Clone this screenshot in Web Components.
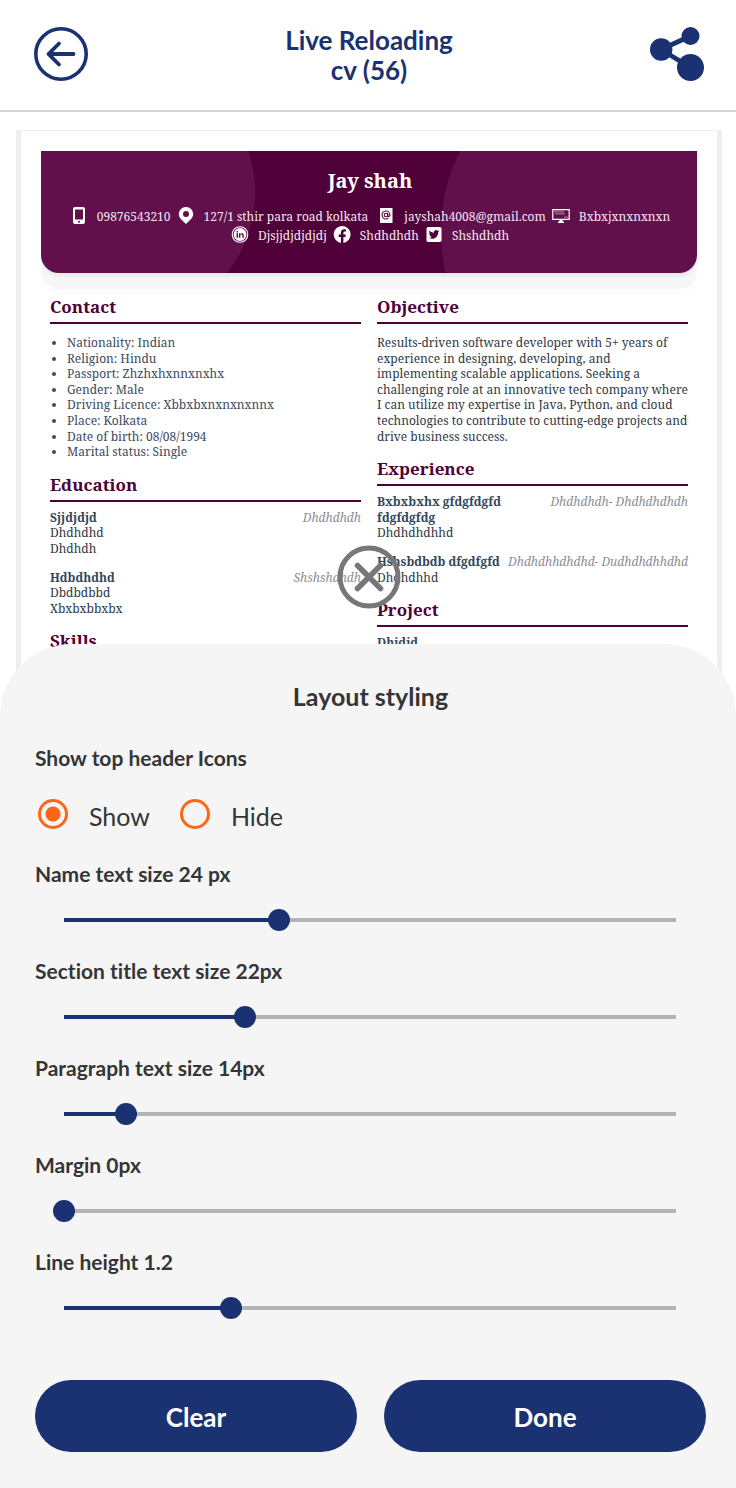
<!DOCTYPE html>
<html lang="en">
<head>
<meta charset="utf-8">
<meta name="viewport" content="width=device-width, initial-scale=1">
<title>Live Reloading cv (56)</title>
<style>
  html, body { margin: 0; height: 100%; background: #fff; }
  body {
    --navy: #1b3272; --plum: #4f0039; --ink: #343537;
    font-family: Lato, "Open Sans", sans-serif; color: var(--ink);
    font-variant-ligatures: none;
  }
</style>
</head>
<body>
<cv-app></cv-app>

<template id="cv-app">
  <style>
    :host { display: flex; flex-direction: column; height: 100vh; min-height: 1200px; }
    cv-preview { flex: 1 1 0; min-height: 0; }
    style-sheet { margin-top: -72px; }
  </style>
  <top-bar><span>Live Reloading</span><span>cv (56)</span></top-bar>
  <cv-preview>
    <cv-header>
      <span slot="name">Jay shah</span>
      <contact-item icon="phone">09876543210</contact-item>
      <contact-item icon="pin">127/1 sthir para road kolkata&nbsp;</contact-item>
      <contact-item icon="mail">jayshah4008@gmail.com</contact-item>
      <contact-item icon="screen">Bxbxjxnxnxnxn</contact-item>
      <contact-item icon="linkedin">Djsjjdjdjdjdj</contact-item>
      <contact-item icon="facebook">Shdhdhdh</contact-item>
      <contact-item icon="twitter">Shshdhdh</contact-item>
    </cv-header>
    <cv-column slot="left">
      <cv-section heading="Contact" roomy>
        <fact-list items="Nationality: Indian|Religion: Hindu|Passport: Zhzhxhxnnxnxhx|Gender: Male|Driving Licence: Xbbxbxnxnxnxnnx|Place: Kolkata|Date of birth: 08/08/1994|Marital status: Single"></fact-list>
      </cv-section>
      <cv-section heading="Education">
        <cv-entry heading="Sjjdjdjd" date="Dhdhdhdh"><div>Dhdhdhd</div><div>Dhdhdh</div></cv-entry>
        <cv-entry heading="Hdbdhdhd" date="Shshshdhdh"><div>Dbdbdbbd</div><div>Xbxbxbbxbx</div></cv-entry>
      </cv-section>
      <cv-section heading="Skills"></cv-section>
    </cv-column>
    <cv-column slot="right">
      <cv-section heading="Objective" roomy>Results-driven software developer with 5+ years of experience in designing, developing, and implementing scalable applications. Seeking a challenging role at an innovative tech company where I can utilize my expertise in Java, Python, and cloud technologies to contribute to cutting-edge projects and drive business success.</cv-section>
      <cv-section heading="Experience">
        <cv-entry heading="Bxbxbxhx gfdgfdgfd fdgfdgfdg" date="Dhdhdhdh- Dhdhdhdhdh"><div>Dhdhdhdhhd</div></cv-entry>
        <cv-entry heading="Hshsbdbdb dfgdfgfd" date="Dhdhdhhdhdhd- Dudhdhdhhdhd"><div>Dhdhdhhd</div></cv-entry>
      </cv-section>
      <cv-section heading="Project">
        <cv-entry heading="Dhjdjd"></cv-entry>
      </cv-section>
    </cv-column>
  </cv-preview>
  <style-sheet></style-sheet>
</template>

<template id="top-bar">
  <style>
    :host { display: block; border-bottom: 2px solid #d3d3d3; }
    header { display: flex; align-items: center; justify-content: space-between; height: 110px; padding: 0 32px 2px 34px; box-sizing: border-box; }
    h1 { display: flex; flex-direction: column; align-items: center; margin: 0; padding-top: 2px; font-size: 26px; line-height: 30px; font-weight: 700; color: var(--navy); }
    button { border: 0; padding: 0; background: none; width: 54px; height: 54px; color: var(--navy); cursor: pointer; }
    svg { display: block; }
  </style>
  <header>
    <button type="button" aria-label="Back">
      <svg width="54" height="54" viewBox="0 0 54 54" fill="none" stroke="currentColor" stroke-linecap="round" stroke-linejoin="round">
        <circle cx="27" cy="27" r="25.2" stroke-width="3.6"/><path d="M39.5 27H14.5M25 16.5L14.5 27L25 37.5" stroke-width="3.8"/>
      </svg>
    </button>
    <h1><slot></slot></h1>
    <button type="button" aria-label="Share">
      <svg width="54" height="54" viewBox="0 0 54 54" fill="currentColor">
        <path d="M11 22.5L40.5 9M11 22.5L40.5 40.5" stroke="currentColor" stroke-width="4.8"/>
        <circle cx="40.500" cy="9" r="9"/><circle cx="11.200" cy="22.500" r="11.200"/><circle cx="40.500" cy="40.500" r="13.500"/>
      </svg>
    </button>
  </header>
</template>

<template id="cv-preview">
  <style>
    :host { display: block; overflow: hidden; font-family: "Noto Serif", serif; font-size: 12px; line-height: 1.3; padding: 18px 14px 0 16px; }
    article { border: solid #eee; border-width: 1px 5px 0; padding: 20px; min-height: 100%; }
    .columns { display: grid; grid-template-columns: 1fr 1fr; gap: 16px; padding: 22px 9px 0; }
  </style>
  <article>
    <slot></slot>
    <div class="columns"><slot name="left"></slot><slot name="right"></slot></div>
  </article>
</template>

<template id="cv-header">
  <style>
    :host {
      display: block; height: 122px; padding: 16px 18px 0 20px; box-sizing: border-box; color: #fff; text-align: center;
      border-radius: 0 0 18px 18px; box-shadow: 0 6px 2px -2px #ebebec, 0 16px 0 0 #f7f7f8, 0 22px 0 0 #fdfcfe;
      background:
        radial-gradient(circle at 83px 41px, #62104b 131px, transparent 131px),
        radial-gradient(circle at calc(100% - 74px) 81px, #62104b 182px, transparent 182px),
        var(--plum);
    }
    h2 { margin: 0 0 12px; font-size: 20px; line-height: 28px; font-weight: 700; }
    .contacts { display: flex; flex-wrap: wrap; justify-content: center; column-gap: 6px; }
  </style>
  <h2><slot name="name"></slot></h2>
  <div class="contacts"><slot></slot></div>
</template>

<template id="contact-item">
  <style>
    :host { display: flex; gap: 9px; line-height: 19px; white-space: nowrap; color: #f1e6ee; }
    svg { display: block; width: 18px; height: 17px; flex: none; color: #fff; }
  </style>
  <span class="icon"></span><slot></slot>
</template>

<template id="cv-column">
  <style>:host { display: flex; flex-direction: column; gap: 13px; min-width: 0; }</style>
  <slot></slot>
</template>

<template id="cv-section">
  <style>
    :host { display: block; color: #2f3a45; }
    h3 { margin: 0; padding-bottom: 3px; border-bottom: 2px solid var(--plum); font-size: 17px; line-height: 24px; font-weight: 700; color: var(--plum); }
    .body { display: flex; flex-direction: column; gap: 13px; padding-top: 8px; }
    :host([roomy]) .body { padding-top: 11px; margin-right: -4px; }
  </style>
  <h3></h3>
  <div class="body"><slot></slot></div>
</template>

<template id="fact-list">
  <style>
    :host { display: block; color: #3d4a60; }
    ul { margin: 0; padding-left: 17px; }
  </style>
  <ul></ul>
</template>

<template id="cv-entry">
  <style>
    :host { display: block; }
    .head { display: flex; justify-content: space-between; gap: 6px; }
    strong { color: #34475b; }
    em { color: #8b8d93; white-space: nowrap; }
  </style>
  <div class="head"><strong></strong><em></em></div>
  <slot></slot>
</template>

<template id="style-sheet">
  <style>
    :host { display: block; position: relative; background: #f5f5f5; border-radius: 72px 72px 0 0; }
    form { display: flex; flex-direction: column; padding: 36px 30px 36px 35px; }
    h2 { margin: 0 0 32px; text-align: center; font-size: 25px; line-height: 32px; font-weight: 700; }
    fieldset { display: grid; gap: 22px; border: 0; margin: 0 0 26px; padding: 0; }
    legend { float: left; padding: 0; font-size: 21px; line-height: 28px; font-weight: 700; }
    .choices { display: flex; gap: 30px; clear: both; padding-left: 3px; }
    .sliders { display: flex; flex-direction: column; gap: 26px; }
    .actions { display: grid; grid-template-columns: 1fr 1fr; gap: 27px; margin-top: 61px; }
    .close {
      position: absolute; bottom: calc(100% + 35px); left: 1px; right: 0; margin: 0 auto;
      width: 64px; height: 64px; border: 0; padding: 0; background: none; color: #777; cursor: pointer;
    }
    .close svg { display: block; }
  </style>
  <button class="close" type="button" aria-label="Close">
    <svg width="64" height="64" viewBox="0 0 64 64" fill="none" stroke="currentColor" stroke-width="5" stroke-linecap="round">
      <circle cx="32" cy="32" r="29"/><path d="M20.500 20.500L43.500 43.500M43.500 20.500L20.500 43.500" stroke-width="5.500"/>
    </svg>
  </button>
  <form>
    <h2>Layout styling</h2>
    <fieldset>
      <legend>Show top header Icons</legend>
      <div class="choices">
        <radio-choice value="show" checked>Show</radio-choice>
        <radio-choice value="hide">Hide</radio-choice>
      </div>
    </fieldset>
    <div class="sliders">
      <range-field min="11" max="48" step="1" value="24">Name text size 24 px</range-field>
      <range-field min="6" max="60" step="1" value="22">Section title text size 22px</range-field>
      <range-field min="9" max="58" step="1" value="14">Paragraph text size 14px</range-field>
      <range-field min="0" max="50" step="1" value="0">Margin 0px</range-field>
      <range-field min="0" max="4.4" step="0.1" value="1.2">Line height 1.2</range-field>
    </div>
    <div class="actions">
      <pill-button>Clear</pill-button>
      <pill-button>Done</pill-button>
    </div>
  </form>
</template>

<template id="radio-choice">
  <style>
    :host { display: block; }
    label { display: flex; align-items: center; gap: 21px; font-size: 25px; line-height: 40px; cursor: pointer; }
    span { padding-top: 2px; margin-bottom: -2px; }
    input {
      appearance: none; box-sizing: border-box; width: 30px; height: 30px; margin: 0;
      border: 3px solid #ff6516; border-radius: 50%;
    }
    input:checked { background: radial-gradient(circle, #ff6516 7px, transparent 8px); }
  </style>
  <label><input type="radio" name="icons"><span><slot></slot></span></label>
</template>

<template id="range-field">
  <style>
    :host { display: block; }
    label { display: block; margin-bottom: 21px; font-size: 21px; line-height: 28px; font-weight: 700; }
    .rail { padding: 0 19px 0 18px; }
    input { appearance: none; display: block; width: 100%; height: 22px; margin: 0; background: none; }
    input::-webkit-slider-runnable-track {
      height: 4px;
      background: linear-gradient(to right, transparent 11px, var(--navy) 11px,
        var(--navy) calc(11px + (100% - 22px) * var(--part)), #b3b3b3 calc(11px + (100% - 22px) * var(--part)),
        #b3b3b3 calc(100% - 11px), transparent calc(100% - 11px));
    }
    input::-webkit-slider-thumb {
      appearance: none; width: 22px; height: 22px; margin-top: -9px; border-radius: 50%; background: var(--navy);
    }
  </style>
  <label for="range"><slot></slot></label>
  <div class="rail"><input id="range" type="range"></div>
</template>

<template id="pill-button">
  <style>
    :host { display: block; }
    button {
      width: 100%; height: 72px; padding: 2px 0 0; border: 0; border-radius: 36px; background: var(--navy); color: #fff;
      font-family: inherit; font-size: 26px; line-height: 32px; font-weight: 700; cursor: pointer;
    }
  </style>
  <button type="button"><slot></slot></button>
</template>

<script>
const icons = {
  phone: '<path fill-rule="evenodd" d="M5 0h8a2 2 0 0 1 2 2v13a2 2 0 0 1-2 2H5a2 2 0 0 1-2-2V2a2 2 0 0 1 2-2zM5 2.500v10h8v-10zM8 14v1.600h2V14z"/>',
  pin: '<path fill-rule="evenodd" d="M9 0a7 7 0 0 1 7.200 7c0 4-3.700 6.500-7.200 10C5.500 13.500 1.800 11 1.800 7A7 7 0 0 1 9 0zm0 4a3 3 0 1 0 0 6 3 3 0 0 0 0-6z"/>',
  mail: '<path d="M3 1h12.500v15H3z"/><g fill="none" stroke="#4f0039" stroke-width="1.100"><circle cx="9" cy="8" r="1.800"/><path d="M10.800 6.200v2.600c0 1.300 2.200 1 2.200-1A4 4 0 1 0 9 12c.9 0 1.600-.2 2.300-.7"/></g>',
  screen: '<path fill="none" stroke="currentColor" stroke-width="1.200" d="M.8 2.600h16.400v9.800H.8z"/><path fill="#b593ac" opacity=".6" d="M2 3.500h10v2H2zM3 6h10v1.500H3zM12 9.500h4V11h-4z"/><path d="M7.500 12.500h3v2H12V16H6v-1.500h1.500z"/>',
  linkedin: '<circle cx="9" cy="8.500" r="7.800" fill="none" stroke="currentColor" stroke-width="1.100"/><circle cx="9" cy="8.500" r="6.400"/><path fill="#62104b" d="M5.500 7.300H7v4.500H5.500zM5.500 5H7v1.500H5.500zM7.900 7.300h1.300v.7c.9-1.300 3.600-1.200 3.600 1.200v2.600h-1.400V9.600c0-1.600-2.100-1.500-2.100 0v2.200H7.900z"/>',
  facebook: '<path d="M9 0a8.500 8.500 0 0 1 1.400 16.900V11h2l.4-2.500h-2.400V7c0-.8.4-1.400 1.500-1.400H13V3.500c-3-.6-5.100.2-5.100 3v2H5.700V11h2.200v5.900A8.500 8.500 0 0 1 9 0z"/>',
  twitter: '<rect x="1.500" y="1" width="15" height="15" rx="1.800"/><path fill="#4f0039" d="M14.200 5.100c-.4.2-.8.300-1.200.3.500-.3.800-.7.900-1.100-.4.200-.9.400-1.300.5a2.200 2.200 0 0 0-3.700 2C7.100 6.700 5.500 5.900 4.400 4.600c-.6 1-.3 2.200.6 2.900-.3 0-.6-.1-.9-.3 0 1.100.7 2 1.700 2.200-.3.100-.6.100-.9 0 .3.900 1.100 1.500 2 1.500-.9.700-2 1-3.100.9 4.500 2.700 9.500-.4 9.400-5.500.4-.3.700-.7 1-1.200z"/>'
};

class Base extends HTMLElement {
  constructor() {
    super();
    this.attachShadow({ mode: 'open' }).append(document.getElementById(this.localName).content.cloneNode(true));
  }
  $(selector) { return this.shadowRoot.querySelector(selector); }
}

for (const tag of ['top-bar', 'cv-preview', 'cv-header', 'cv-column', 'cv-app']) {
  customElements.define(tag, class extends Base {});
}

customElements.define('contact-item', class extends Base {
  connectedCallback() {
    this.$('.icon').innerHTML = `<svg viewBox="0 0 18 17" fill="currentColor" aria-hidden="true">${icons[this.getAttribute('icon')]}</svg>`;
  }
});

customElements.define('cv-section', class extends Base {
  connectedCallback() { this.$('h3').textContent = this.getAttribute('heading'); }
});

customElements.define('fact-list', class extends Base {
  connectedCallback() {
    this.$('ul').replaceChildren(...this.getAttribute('items').split('|').map(text => {
      const li = document.createElement('li');
      li.textContent = text;
      return li;
    }));
  }
});

customElements.define('cv-entry', class extends Base {
  connectedCallback() {
    this.$('strong').textContent = this.getAttribute('heading');
    this.$('em').textContent = this.getAttribute('date') || '';
  }
});

customElements.define('radio-choice', class extends Base {
  connectedCallback() {
    const input = this.$('input');
    input.value = this.getAttribute('value');
    input.checked = this.hasAttribute('checked');
    input.addEventListener('change', () => {
      for (const other of this.parentNode.querySelectorAll('radio-choice')) {
        if (other !== this) other.$('input').checked = false;
      }
    });
  }
});

customElements.define('range-field', class extends Base {
  connectedCallback() {
    const input = this.$('input');
    for (const name of ['min', 'max', 'step', 'value']) input[name] = this.getAttribute(name);
    const paint = () => input.style.setProperty('--part', (input.value - input.min) / (input.max - input.min));
    input.addEventListener('input', paint);
    paint();
  }
});

customElements.define('pill-button', class extends Base {});
customElements.define('style-sheet', class extends Base {});
</script>
</body>
</html>
